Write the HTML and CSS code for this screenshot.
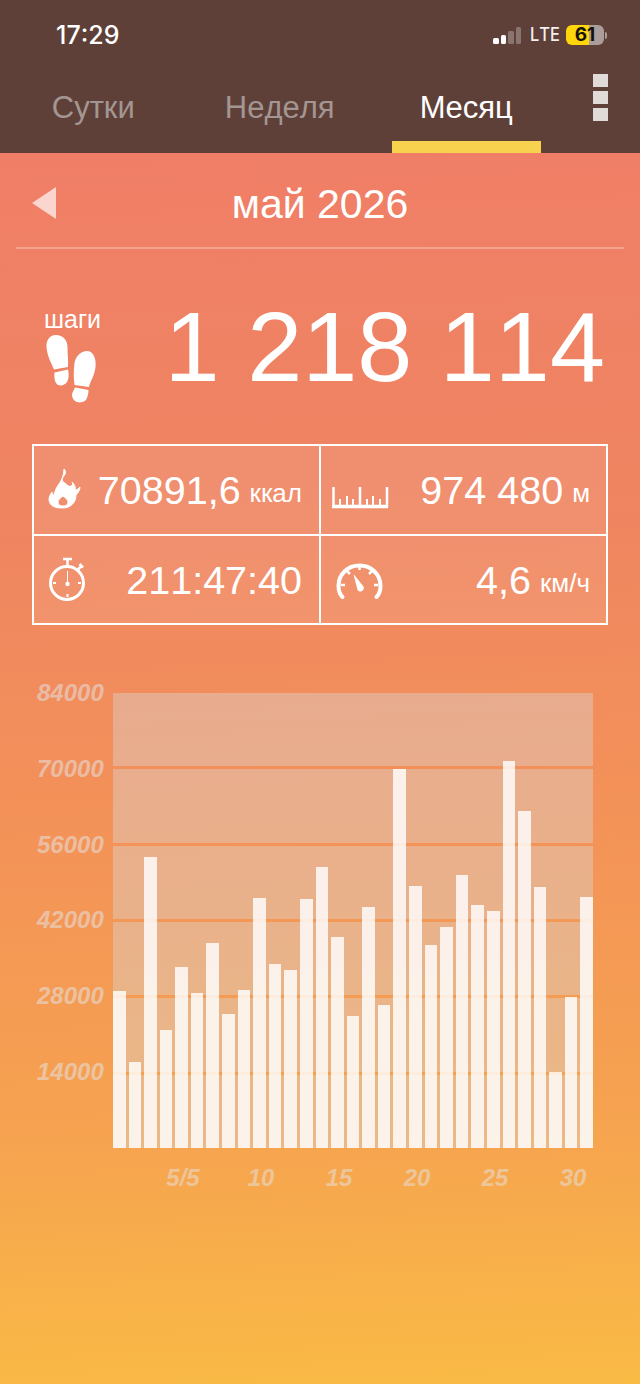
FILE: index.html
```html
<!DOCTYPE html>
<html lang="ru">
<head>
<meta charset="utf-8">
<title>Шаги</title>
<link rel="stylesheet" href="styles.css">
</head>
<body>
<div class="page">
  <header class="top">
    <div class="status">
      <span class="time">17:29</span>
      <div class="status-right">
        <div class="signal"><i class="s1"></i><i class="s2"></i><i class="s3"></i><i class="s4"></i></div>
        <span class="lte">LTE</span>
        <div class="battery"><span class="batt-num">61</span></div>
        <i class="batt-tip"></i>
      </div>
    </div>
    <nav class="tabs">
      <div class="tab">Сутки</div>
      <div class="tab">Неделя</div>
      <div class="tab active">Месяц</div>
      <div class="menu"><i></i><i></i><i></i></div>
    </nav>
  </header>

  <main class="content">
    <div class="month">
      <i class="arrow"></i>
      <h1 class="month-title">май 2026</h1>
    </div>

    <section class="steps">
      <div class="steps-label">
        <span class="steps-word">шаги</span>
        <svg class="feet" viewBox="0 0 65 78" width="65" height="78" aria-hidden="true">
          <g fill="#fff">
            <path d="M16 5C9 5 6 11 6.500 18c1 8 4 14 7.500 21.500L28 37c.5-6-.5-12-.5-20C27.500 10 23 5 16 5z"/>
            <path d="M14.500 42.500L28 39.500c1 5 1 9-1 12.500-2 3-6 4-9 3-3-2-4-6-3.500-12.500z"/>
            <path d="M47 21c-6 0-11.500 5-12.500 12-1 8-1 15 0 22l14.500 2c1-5 5.500-11 6.500-20 1-9-2.500-16-8.500-16z"/>
            <path d="M35 57.500L48.500 60c0 4-1 7-2.500 10-2 2-6 3-9 2-3-1-5-4-5-7 0-3 2-4.500 3-7.500z"/>
          </g>
        </svg>
      </div>
      <div class="steps-value">1 218 114</div>
    </section>

    <section class="stats">
      <div class="cell">
        <svg class="ic" viewBox="0 0 50 52" width="50" height="52" aria-hidden="true">
          <path fill="#fff" stroke="#fff" stroke-width="1" fill-rule="evenodd" d="M22 5c3 3 1 6-1 8-2 3 0 5 3 7 2 2 4 3 5 2 2-1 2-2 1-4 3 3 4 6 3 8 2 0 3-1 5-3 0 3-2 6-4 8 0 8-6 13-13 13S8 43 7 36c0-3 1-5 3-8 0 2 1 3 2 3 1-4 2-7 5-11 2-3 5-8 5-15zM21 32c-3 2-5 4-5 6 0 3 2 4 5 4s5-1 5-4c0-2-2-4-5-6z"/>
        </svg>
        <span class="val">70891,6</span><span class="unit">ккал</span>
      </div>
      <div class="cell">
        <svg class="ic ic-ruler" viewBox="328 480 66 34" width="66" height="34" aria-hidden="true">
          <path fill="none" stroke="#fff" stroke-width="2" d="M340 500v7M347 497v10M353 500v7M367 500v7M373 497v10M380 500v7"/>
          <path fill="none" stroke="#fff" stroke-width="2.500" d="M333.500 488v20M360 488v20M387 488v20"/>
          <path fill="none" stroke="#fff" stroke-width="3.500" d="M332 507.500h56"/>
        </svg>
        <span class="val">974 480</span><span class="unit">м</span>
      </div>
      <div class="cell">
        <svg class="ic" viewBox="0 0 50 56" width="50" height="56" aria-hidden="true">
          <g fill="none" stroke="#fff">
            <circle cx="25" cy="31" r="16.500" stroke-width="3"/>
            <path stroke-width="2.500" d="M21 7h9M25.500 7v7M35.500 18l4-4M37.500 12l3.500 3.500"/>
            <path stroke-width="2" d="M11 31h3M36 31h3M25.500 42v3"/>
            <path stroke-width="1" d="M25.500 19v12"/>
          </g>
          <circle cx="25.500" cy="32" r="2.200" fill="#fff"/>
        </svg>
        <span class="val">211:47:40</span>
      </div>
      <div class="cell">
        <svg class="ic ic-gauge" viewBox="0 0 60 50" width="60" height="50" aria-hidden="true">
          <g fill="none" stroke="#fff">
            <path stroke-width="4" stroke-linecap="round" d="M12.500 41C9.500 38 8.500 34 8.500 30 8.500 18 18 9.500 29.500 9.500S50.500 18 50.500 30c0 4-1 8-4 11"/>
            <path stroke-width="2.500" d="M29.500 10v4M17 15l3 3M42 15l-3 3M11 29h4M48 29h-4"/>
          </g>
          <path fill="#fff" d="M23.500 18L33.500 30.500a3.500 3.500 0 0 1-6 3.500z"/>
        </svg>
        <span class="val">4,6</span><span class="unit">км/ч</span>
      </div>
    </section>

    <section class="chart">
      <div class="y-axis">
        <span class="y">84000</span><span class="y">70000</span><span class="y">56000</span><span class="y">42000</span><span class="y">28000</span><span class="y">14000</span><span class="y"></span>
      </div>
      <div class="chart-main">
        <div class="plot">
          <div class="bands"><i></i><i></i><i></i><i></i><i></i><i></i></div>
          <div class="bars">
            <i style="height:157px"></i><i style="height:86px"></i><i style="height:291px"></i><i style="height:118px"></i><i style="height:181px"></i><i style="height:155px"></i><i style="height:205px"></i><i style="height:134px"></i><i style="height:158px"></i><i style="height:250px"></i><i style="height:184px"></i><i style="height:178px"></i><i style="height:249px"></i><i style="height:281px"></i><i style="height:211px"></i><i style="height:132px"></i><i style="height:241px"></i><i style="height:143px"></i><i style="height:379px"></i><i style="height:262px"></i><i style="height:203px"></i><i style="height:221px"></i><i style="height:273px"></i><i style="height:243px"></i><i style="height:237px"></i><i style="height:387px"></i><i style="height:337px"></i><i style="height:261px"></i><i style="height:76px"></i><i style="height:151px"></i><i style="height:251px"></i>
          </div>
        </div>
        <div class="x-axis">
          <span>5/5</span><span>10</span><span>15</span><span>20</span><span>25</span><span>30</span>
        </div>
      </div>
    </section>
  </main>
</div>
</body>
</html>
```
FILE: styles.css
```css
* { box-sizing: border-box; }
html, body { margin: 0; padding: 0; }
body { width: 640px; height: 1384px; overflow: hidden; font-family: "Liberation Sans", Arial, sans-serif; color: #fff; font-kerning: none; }
i { display: block; }
.page { width: 640px; height: 1384px; display: flex; flex-direction: column; }

.top { height: 153px; background: #5f4039; flex: none; }
.status { height: 62px; padding: 20px 33px 0 56px; display: flex; justify-content: space-between; align-items: flex-start; }
.time { font-family: Inter, sans-serif; font-weight: 500; font-size: 25px; line-height: 30px; }
.status-right { display: flex; align-items: center; height: 30px; }
.signal { display: flex; align-items: flex-end; gap: 2px; height: 18px; margin-right: 9px; }
.signal i { width: 5.500px; border-radius: 1.500px; background: #fff; }
.signal .s1 { height: 6px; }
.signal .s2 { height: 9px; }
.signal .s3 { height: 13px; background: #8a7470; }
.signal .s4 { height: 17px; background: #8a7470; }
.lte { width: 28px; margin-right: 8px; font-family: Inter, sans-serif; font-size: 19px; font-weight: 500; line-height: 30px; color: #f4f0ee; transform: scaleX(.86); transform-origin: left center; }
.battery { width: 38px; height: 20px; border-radius: 6px; background: linear-gradient(90deg, #ffd60a 0 61%, #ab9d9a 61%); display: flex; align-items: center; justify-content: center; }
.batt-num { font-family: Inter, sans-serif; font-weight: 700; font-size: 19px; line-height: 20px; color: #16120a; }
.batt-tip { width: 2px; height: 7px; margin-left: 1px; background: #ab9d9a; border-radius: 0 2px 2px 0; }

.tabs { height: 91px; display: flex; }
.tab { width: 186.500px; padding-top: 25px; text-align: center; font-size: 31px; line-height: 42px; color: #a39692; border-bottom: 12px solid transparent; }
.tab.active { color: #fff; border-bottom: 0; position: relative; }
.tab.active::after { content: ""; position: absolute; left: 19px; right: 19px; bottom: 0; height: 12px; background: #f8d14f; }
.menu { flex: 1; padding: 12px 32px 0 33px; display: flex; flex-direction: column; gap: 4px; }
.menu i { height: 13px; background: #e0dbd9; }

.content { flex: 1; background: linear-gradient(178deg, #f07e67 0%, #ef8561 30%, #f39159 52%, #f6a250 78%, #fabb45 100%); padding: 0 16px; }
.month { height: 96px; position: relative; border-bottom: 2px solid rgba(255,255,255,.28); display: flex; align-items: center; justify-content: center; padding-top: 8px; }
.arrow { position: absolute; left: 16px; top: 34px; width: 0; height: 0; border-style: solid; border-width: 16px 24px 16px 0; border-color: transparent rgba(255,255,255,.68) transparent transparent; }
.month-title { margin: 0; font-weight: 400; font-size: 41px; line-height: 48px; }

.steps { display: flex; justify-content: space-between; height: 195px; padding: 57px 19px 0 28px; }
.steps-label { display: flex; flex-direction: column; align-items: flex-start; }
.steps-word { font-size: 25px; line-height: 26px; }
.feet { display: block; margin-top: -2px; margin-left: -4px; }
.steps-value { font-size: 99px; line-height: 78px; margin-top: 2px; }

.stats { width: 576px; height: 181px; margin-left: 16px; display: grid; grid-template-columns: 287px 285px; grid-template-rows: 90px 87px; border: 2px solid #fff; background: rgba(255,255,255,.09); }
.cell { display: flex; align-items: center; padding: 0 16px 0 7px; border-bottom: 2px solid #fff; }
.cell:nth-child(odd) { border-right: 2px solid #fff; padding: 0 17px 0 8px; }
.cell:nth-child(n+3) { border-bottom: 0; }
.ic { display: block; flex: none; margin-right: auto; }
.ic-ruler { margin-top: 12px; }
.ic-gauge { margin-left: 2px; margin-top: 2px; }
.val { font-size: 39.500px; line-height: 44px; }
.unit { font-size: 26px; line-height: 44px; margin-left: 9px; padding-top: 6px; }

.chart { display: flex; margin-top: 68px; margin-left: 21px; }
.y-axis { width: 76px; height: 455px; display: flex; flex-direction: column; justify-content: space-between; }
.y { height: 0; display: flex; align-items: center; font-size: 24px; font-weight: 700; font-style: italic; color: rgba(228,228,228,.55); }
.chart-main { width: 480px; }
.plot { position: relative; height: 455px; }
.bands { position: absolute; inset: 0; display: flex; flex-direction: column; gap: 3px; }
.bands i { flex: 1; background: rgba(218,218,218,.4); }
.bars { position: relative; height: 455px; display: grid; grid-template-columns: repeat(31, 1fr); column-gap: 3px; align-items: end; }
.bars i { background: rgba(255,255,255,.82); }
.x-axis { display: flex; margin-left: 31px; margin-top: 16px; }
.x-axis span { flex: none; width: 78px; text-align: center; font-size: 24px; line-height: 28px; font-weight: 700; font-style: italic; color: rgba(228,228,228,.5); }
```
